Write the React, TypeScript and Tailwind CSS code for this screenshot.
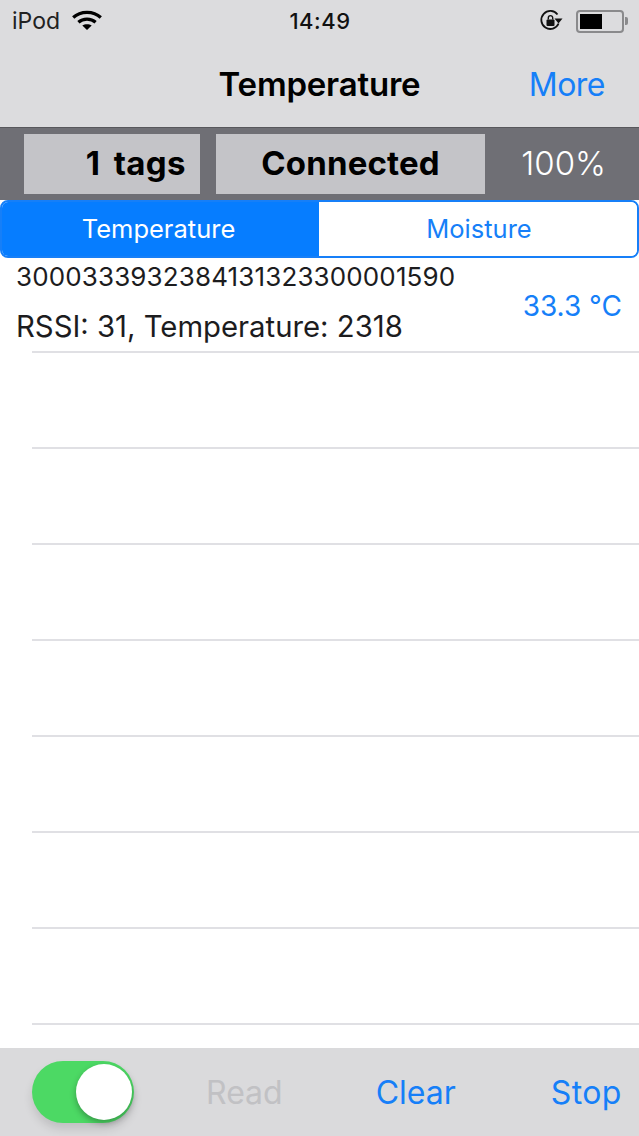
const rows = [0, 1, 2, 3, 4, 5, 6];

function Wifi() {
  return (
    <svg width="32" height="22" viewBox="0 0 32 22" className="ml-[11px] -mt-[3px]">
      <path d="M2.2 8.5C9.5 1.6 22.5 1.6 29.8 8.5" fill="none" stroke="#000" strokeWidth="3.2" />
      <path d="M7.4 13.2C12 9 20 9 24.6 13.2" fill="none" stroke="#000" strokeWidth="3.2" />
      <path d="M11.3 16.6C13.8 14.8 18.2 14.8 20.7 16.6L16 21Z" fill="#000" />
    </svg>
  );
}

function RotationLock() {
  return (
    <svg width="24" height="24" viewBox="0 0 24 24">
      <path d="M19.6 14.5A9 9 0 1 1 18.5 5.5" fill="none" stroke="#111" strokeWidth="1.8" />
      <path d="M15.5 9.5L23.5 9.5L19.5 14.5Z" fill="#111" />
      <rect x="7.5" y="10.5" width="8" height="6.5" rx="1" fill="#111" />
      <path d="M9.3 10.5V8.8a2.2 2.2 0 0 1 4.4 0V10.5" fill="none" stroke="#111" strokeWidth="1.4" />
    </svg>
  );
}

function Battery() {
  return (
    <div className="flex items-center">
      <div className="flex h-[23px] w-[48px] items-center rounded-[4px] border-2 border-[#8a8a8c] p-[2px]">
        <div className="h-[15px] w-[22px] bg-black" />
      </div>
      <div className="ml-[1px] h-[8px] w-[3px] rounded-r-[2px] bg-[#8a8a8c]" />
    </div>
  );
}

export default function App() {
  return (
    <div
      className="flex h-[1136px] w-[639px] flex-col overflow-hidden bg-white text-black"
      style={{ fontFamily: 'Inter, "Liberation Sans", sans-serif' }}
    >
      <header className="h-[128px] shrink-0 border-b border-[#58585c] bg-[#dcdcde]">
        <div className="flex h-[42px] items-center justify-between pl-[12px] pr-[11px]">
          <div className="flex w-[200px] items-center">
            <span className="text-[23px] text-[#222]">iPod</span>
            <Wifi />
          </div>
          <span className="text-[22px] font-medium tracking-[0.5px] text-[#111]">14:49</span>
          <div className="flex w-[200px] items-center justify-end gap-[13px]">
            <RotationLock />
            <Battery />
          </div>
        </div>
        <div className="flex h-[85px] items-center justify-between pt-[1px]">
          <span className="w-[150px]" />
          <h1 className="text-[33px] font-semibold tracking-[-0.2px] text-black">Temperature</h1>
          <span className="w-[150px] pr-[34px] text-right text-[32px] tracking-[-0.5px] text-[#167ff8]">More</span>
        </div>
      </header>

      <section className="flex h-[72px] shrink-0 items-start bg-[#6f6f75] pl-[24px] pt-[6px]">
        <div className="flex h-[60px] w-[176px] items-center justify-end bg-[#c4c4c8] pr-[14px] text-[33px] font-bold tracking-[0.4px] [word-spacing:5px]">
          1 tags
        </div>
        <div className="ml-[16px] flex h-[60px] w-[269px] items-center justify-center bg-[#c4c4c8] text-[33px] font-bold tracking-[0.15px]">
          Connected
        </div>
        <div className="flex h-[60px] flex-1 items-center justify-end pr-[33px] text-[33px] font-light text-white">100%</div>
      </section>

      <nav className="flex h-[58px] shrink-0 overflow-hidden rounded-[8px] border-2 border-[#167ff8] text-[25.5px]">
        <div className="flex w-[317px] items-center justify-center bg-[#067dff] pr-[4px] pt-[1px] text-white">Temperature</div>
        <div className="flex flex-1 items-center justify-center bg-white pl-[2px] pt-[1px] text-[#167ff8]">Moisture</div>
      </nav>

      <main className="flex-1 bg-white">
        <div className="flex h-[93px] items-start justify-between pl-[16px] pr-[17px]">
          <div className="flex flex-col gap-[6px] text-[#1c1c1e]">
            <span className="text-[26px] leading-[38px] tracking-[0.13px]">3000333932384131323300001590</span>
            <span className="text-[29.3px] leading-[50px]">RSSI: 31, Temperature: 2318</span>
          </div>
          <span className="mt-[27px] text-[28px] leading-[42px] text-[#167ff8]">33.3 °C</span>
        </div>
        <div className="ml-[32px] h-[2px] bg-[#e0e0e4]" />
        {rows.map((r) => (
          <div key={r} className="ml-[32px] h-[96px] border-b-2 border-[#e0e0e4]" />
        ))}
      </main>

      <footer className="flex h-[88px] shrink-0 items-center bg-[#dadadc] pl-[32px]">
        <div className="flex h-[62px] w-[102px] items-center justify-end rounded-full bg-[#4cd964] pr-[2px] shadow-[0_6px_10px_rgba(0,0,0,0.12)]">
          <div className="h-[56px] w-[56px] rounded-full bg-white shadow-[0_3px_6px_rgba(0,0,0,0.3)]" />
        </div>
        <span className="ml-[72px] pt-[2px] text-[32px] text-[#c1c1c4]">Read</span>
        <span className="ml-[93px] pt-[2px] text-[32px] text-[#167ff8]">Clear</span>
        <span className="ml-[95px] pt-[2px] text-[32px] tracking-[0.4px] text-[#167ff8]">Stop</span>
      </footer>
    </div>
  );
}
